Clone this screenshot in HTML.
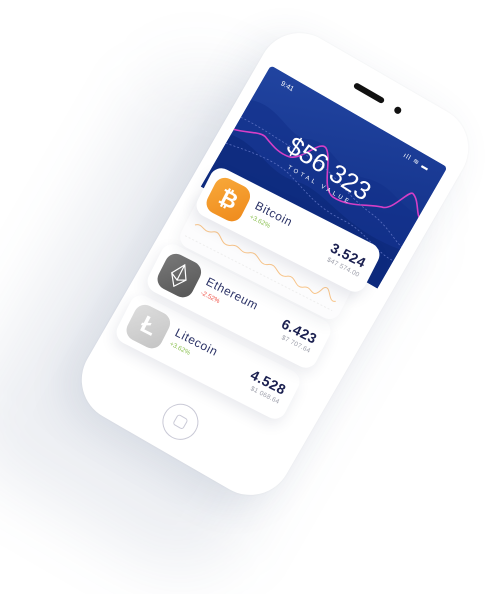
<!DOCTYPE html>
<html><head><meta charset="utf-8"><style>
*{margin:0;padding:0;box-sizing:border-box}
body{width:498px;height:579px;background:#fff;overflow:hidden;position:relative;font-family:"Liberation Sans",sans-serif}
.shadow{position:absolute;left:40px;top:90px;width:300px;height:460px;border-radius:60px;transform:rotate(30deg);background:rgba(60,80,120,0.09);filter:blur(32px)}
.phone{position:absolute;left:160px;top:46px;width:230px;height:436px;border-radius:42px;background:#fff;transform:rotate(30deg);box-shadow:-10px 14px 40px rgba(60,80,120,0.12),0 0 2px rgba(0,0,0,0.05)}
.screen{position:absolute;left:12px;top:48px;width:204px;height:330px;background:#fff;border-radius:4px;overflow:hidden}
.blue{position:absolute;left:0;top:0;width:204px;height:140px;background:linear-gradient(160deg,#2144a0,#0e2b82)}
.spk{position:absolute;left:94px;top:20px;width:34px;height:6px;border-radius:3px;background:#111}
.dot{position:absolute;left:141px;top:20px;width:7px;height:7px;border-radius:50%;background:#111}
.home{position:absolute;left:94px;top:384px;width:36px;height:36px;border-radius:50%;border:1px solid #c9c9d6}
.home i{position:absolute;left:11px;top:11px;width:12px;height:12px;border:1px solid #c9c9d6;border-radius:3px}
.card{position:absolute;width:188px;height:52px;border-radius:12px;background:#fff;transform:rotate(27deg);box-shadow:0 6px 14px rgba(40,50,90,0.10)}
.back{position:absolute;border-radius:12px;background:#fcfcfd;transform:rotate(27deg);box-shadow:0 6px 14px rgba(40,50,90,0.07)}
.ic{position:absolute;left:8px;top:7px;width:38px;height:38px;border-radius:11px;color:#fff;font-weight:bold;text-align:center;line-height:38px;font-size:22px}
.nm{position:absolute;left:54px;top:11px;font-size:12px;color:#2b3266;letter-spacing:.6px}
.pc{position:absolute;left:54px;top:28px;font-size:6.5px}
.nu{position:absolute;right:10px;top:13px;font-size:14px;font-weight:bold;color:#1b2050;letter-spacing:.5px}
.sv{position:absolute;right:10px;top:31px;font-size:6.5px;color:#9a9ca8;letter-spacing:.3px}
</style></head><body>
<div class="shadow"></div>
<div class="phone">
 <div class="spk"></div><div class="dot"></div>
 <div class="screen">
  <div class="blue">
   <svg width="204" height="140" style="position:absolute;left:0;top:0">
    <path d="M0 40 C30 30 50 55 70 45 C90 35 110 60 140 50 C165 42 185 60 204 55 L204 140 L0 140Z" fill="#13318a" opacity=".6"/>
    <path d="M0 80 C30 75 50 95 80 88 C110 80 140 105 204 95 L204 140 L0 140Z" fill="#0b2878" opacity=".6"/>
    <path d="M0 74 C15 70 25 62 32 65 C45 70 52 72 62 70 C75 66 80 40 89 44 C100 50 105 82 120 83 C140 84 155 70 168 67 C178 64 182 40 187 40 C195 42 200 55 205 58" fill="none" stroke="#d63fc6" stroke-width="1.6"/>
    <path d="M0 60 C30 58 50 62 80 60 C100 58 130 75 160 78 C180 80 195 90 204 92" fill="none" stroke="#5a6fc0" stroke-width=".8" stroke-dasharray="2 2"/>
    <path d="M0 90 C25 85 50 80 70 85 C95 92 110 100 140 98 C165 96 185 110 204 108" fill="none" stroke="#5a6fc0" stroke-width=".8" stroke-dasharray="2 2"/>
   </svg>
   <div style="position:absolute;left:18px;top:7px;color:#fff;font-size:7px">9:41</div>
   <div style="position:absolute;left:160px;top:7px;color:#fff;font-size:7px;letter-spacing:1px">ıll ≋ ▬</div>
   <div style="position:absolute;left:0;width:204px;top:45px;text-align:center;color:#fff;font-size:26px;transform:rotate(3deg)">$56 323</div>
   <div style="position:absolute;left:0;width:204px;top:77px;text-align:center;color:#fff;font-size:6px;letter-spacing:3px">TOTAL VALUE</div>
  </div>
 </div>
 <div class="home"><i></i></div>
</div>

<div class="card" style="left:114px;top:331px">
 <div class="ic" style="background:linear-gradient(135deg,#dedede,#c4c4c4);font-size:24px">Ł</div>
 <div class="nm">Litecoin</div><div class="pc" style="color:#8cc152">+3.62%</div>
 <div class="nu">4.528</div><div class="sv">$1 068.64</div>
</div>
<div class="card" style="left:145px;top:280px">
 <div class="ic" style="background:linear-gradient(135deg,#7a7a7a,#555)">
  <svg width="38" height="38" viewBox="0 0 38 38"><path d="M19 7 L11 20 L19 31 L27 20 Z M11 20 L19 24 L27 20 M19 7 L19 24" fill="none" stroke="#fff" stroke-width="1.2"/></svg>
 </div>
 <div class="nm">Ethereum</div><div class="pc" style="color:#f0554a">-2.52%</div>
 <div class="nu">6.423</div><div class="sv">$7 707.64</div>
</div>
<div class="back" style="left:180px;top:226px;width:178px;height:60px">
 <svg width="178" height="60" style="position:absolute;left:0;top:0">
  <path d="M5 22 L170 22 M5 50 L170 50" stroke="#eee" stroke-dasharray="2 2"/>
  <path d="M9 36 C15 30 20 40 28 34 C36 28 40 44 50 38 C58 32 62 42 70 36 C78 30 84 44 92 38 C100 32 105 46 114 40 C122 34 126 48 134 42 C142 36 146 52 152 34 C158 26 162 46 169 40" fill="none" stroke="#f8c58a" stroke-width="1"/>
 </svg>
</div>
<div class="card" style="left:194px;top:204px">
 <div class="ic" style="background:linear-gradient(135deg,#f8a93a,#ef8a1c)">₿</div>
 <div class="nm">Bitcoin</div><div class="pc" style="color:#8cc152">+3.62%</div>
 <div class="nu">3.524</div><div class="sv">$47 574.00</div>
</div>
</body></html>
